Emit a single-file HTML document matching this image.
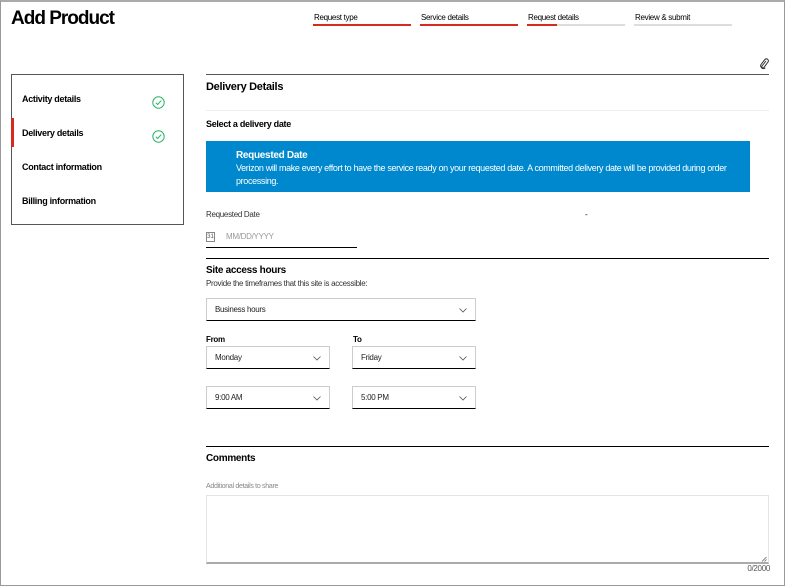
<!DOCTYPE html>
<html><head><style>
*{margin:0;padding:0;box-sizing:border-box}
body{width:786px;height:586px;background:#fff;font-family:"Liberation Sans",sans-serif;color:#000;position:relative;overflow:hidden}
.a{position:absolute}
.frame{left:0;top:0;width:785px;height:586px;border:1px solid #999;border-top:2px solid #aaa}
.t{font-size:9px;letter-spacing:-0.3px}
.b{font-weight:bold}
.sel{position:absolute;border:1px solid #ccc;border-bottom:1px solid #000;height:23px;font-size:8px;padding:6px 0 0 8px;letter-spacing:-0.3px;color:#222}
.sel svg{position:absolute;right:8px;top:9px}
</style></head><body>
<div class="a frame"></div>
<div class="a b" style="left:11px;top:8px;font-size:19px;letter-spacing:-1px">Add Product</div>

<div class="a t" style="left:314px;top:13px;font-size:8px">Request type</div>
<div class="a" style="left:313px;top:24px;width:98px;height:2px;background:#d52b1e"></div>
<div class="a t" style="left:421px;top:13px;font-size:8px">Service details</div>
<div class="a" style="left:420px;top:24px;width:98px;height:2px;background:#d52b1e"></div>
<div class="a t" style="left:528px;top:13px;font-size:8px">Request details</div>
<div class="a" style="left:527px;top:24px;width:98px;height:2px;background:#ddd"></div>
<div class="a" style="left:527px;top:24px;width:30px;height:2px;background:#d52b1e"></div>
<div class="a t" style="left:635px;top:13px;font-size:8px">Review &amp; submit</div>
<div class="a" style="left:634px;top:24px;width:98px;height:2px;background:#ddd"></div>

<svg class="a" style="left:758px;top:58px" width="12" height="12" viewBox="0 0 12 12"><path d="M8 3 L4 8 a1.2 1.2 0 0 0 2 1.4 L10 4 a2 2 0 0 0-3-2.6 L3 6.5 a2.8 2.8 0 0 0 4.3 3.4" fill="none" stroke="#333" stroke-width="1"/></svg>

<div class="a" style="left:11px;top:74px;width:173px;height:151px;border:1px solid #555"></div>
<div class="a" style="left:11px;top:118px;width:3px;height:29px;background:#d52b1e"></div>
<div class="a t b" style="left:22px;top:94px">Activity details</div>
<div class="a t b" style="left:22px;top:128px">Delivery details</div>
<div class="a t b" style="left:22px;top:162px">Contact information</div>
<div class="a t b" style="left:22px;top:196px">Billing information</div>
<svg class="a" style="left:152px;top:96px" width="13" height="13" viewBox="0 0 13 13"><circle cx="6.5" cy="6.5" r="5.7" fill="none" stroke="#2bb467" stroke-width="1"/><path d="M3.8 6.7 L5.7 8.5 L9.2 4.6" fill="none" stroke="#2bb467" stroke-width="1"/></svg>
<svg class="a" style="left:152px;top:130px" width="13" height="13" viewBox="0 0 13 13"><circle cx="6.5" cy="6.5" r="5.7" fill="none" stroke="#2bb467" stroke-width="1"/><path d="M3.8 6.7 L5.7 8.5 L9.2 4.6" fill="none" stroke="#2bb467" stroke-width="1"/></svg>

<div class="a" style="left:206px;top:74px;width:563px;height:1px;background:#555"></div>
<div class="a b" style="left:206px;top:81px;font-size:11px;letter-spacing:-0.3px">Delivery Details</div>
<div class="a" style="left:206px;top:110px;width:563px;height:1px;background:#eee"></div>
<div class="a t b" style="left:206px;top:119px">Select a delivery date</div>

<div class="a" style="left:206px;top:141px;width:544px;height:51px;background:#0088ce;color:#fff;padding:9px 0 0 30px">
<div class="b" style="font-size:10px;letter-spacing:-0.3px">Requested Date</div>
<div style="font-size:9px;letter-spacing:-0.35px;line-height:13px;margin-top:1px">Verizon will make every effort to have the service ready on your requested date. A committed delivery date will be provided during order processing.</div>
</div>

<div class="a" style="left:206px;top:210px;font-size:8px;letter-spacing:-0.3px;color:#333">Requested Date</div>
<div class="a" style="left:585px;top:210px;font-size:8px">-</div>
<div class="a" style="left:206px;top:232px;width:9px;height:10px;border:1px solid #888;font-size:6px;color:#555;text-align:center;line-height:9px">31</div>
<div class="a" style="left:226px;top:232px;font-size:8px;color:#999;letter-spacing:-0.3px">MM/DD/YYYY</div>
<div class="a" style="left:206px;top:247px;width:151px;height:1px;background:#000"></div>

<div class="a" style="left:206px;top:258px;width:563px;height:1px;background:#000"></div>
<div class="a b" style="left:206px;top:265px;font-size:10px;letter-spacing:-0.3px">Site access hours</div>
<div class="a" style="left:206px;top:279px;font-size:8px;letter-spacing:-0.3px;color:#333">Provide the timeframes that this site is accessible:</div>

<div class="sel" style="left:206px;top:298px;width:270px">Business hours<svg width="8" height="5" viewBox="0 0 8 5"><path d="M0.5 0.5 L4 4 L7.5 0.5" fill="none" stroke="#555" stroke-width="0.8"/></svg></div>
<div class="a t b" style="left:206px;top:335px;font-size:8px">From</div>
<div class="a t b" style="left:353px;top:335px;font-size:8px">To</div>
<div class="sel" style="left:206px;top:346px;width:124px">Monday<svg width="8" height="5" viewBox="0 0 8 5"><path d="M0.5 0.5 L4 4 L7.5 0.5" fill="none" stroke="#555" stroke-width="0.8"/></svg></div>
<div class="sel" style="left:352px;top:346px;width:124px">Friday<svg width="8" height="5" viewBox="0 0 8 5"><path d="M0.5 0.5 L4 4 L7.5 0.5" fill="none" stroke="#555" stroke-width="0.8"/></svg></div>
<div class="sel" style="left:206px;top:386px;width:124px">9:00 AM<svg width="8" height="5" viewBox="0 0 8 5"><path d="M0.5 0.5 L4 4 L7.5 0.5" fill="none" stroke="#555" stroke-width="0.8"/></svg></div>
<div class="sel" style="left:352px;top:386px;width:124px">5:00 PM<svg width="8" height="5" viewBox="0 0 8 5"><path d="M0.5 0.5 L4 4 L7.5 0.5" fill="none" stroke="#555" stroke-width="0.8"/></svg></div>

<div class="a" style="left:206px;top:446px;width:563px;height:1px;background:#000"></div>
<div class="a b" style="left:206px;top:453px;font-size:10px;letter-spacing:-0.3px">Comments</div>
<div class="a" style="left:206px;top:483px;font-size:7px;color:#888;letter-spacing:-0.3px">Additional details to share</div>
<div class="a" style="left:206px;top:495px;width:563px;height:69px;border:1px solid #e4e4e4;border-bottom:2px solid #aaa"></div>
<svg class="a" style="left:761px;top:556px" width="6" height="6" viewBox="0 0 6 6"><path d="M1 5.5 L5.5 1 M3.5 5.5 L5.5 3.5" stroke="#666" stroke-width="0.8"/></svg>
<div class="a" style="right:16px;top:564px;font-size:8px;color:#555;letter-spacing:-0.3px">0/2000</div>
</body></html>
